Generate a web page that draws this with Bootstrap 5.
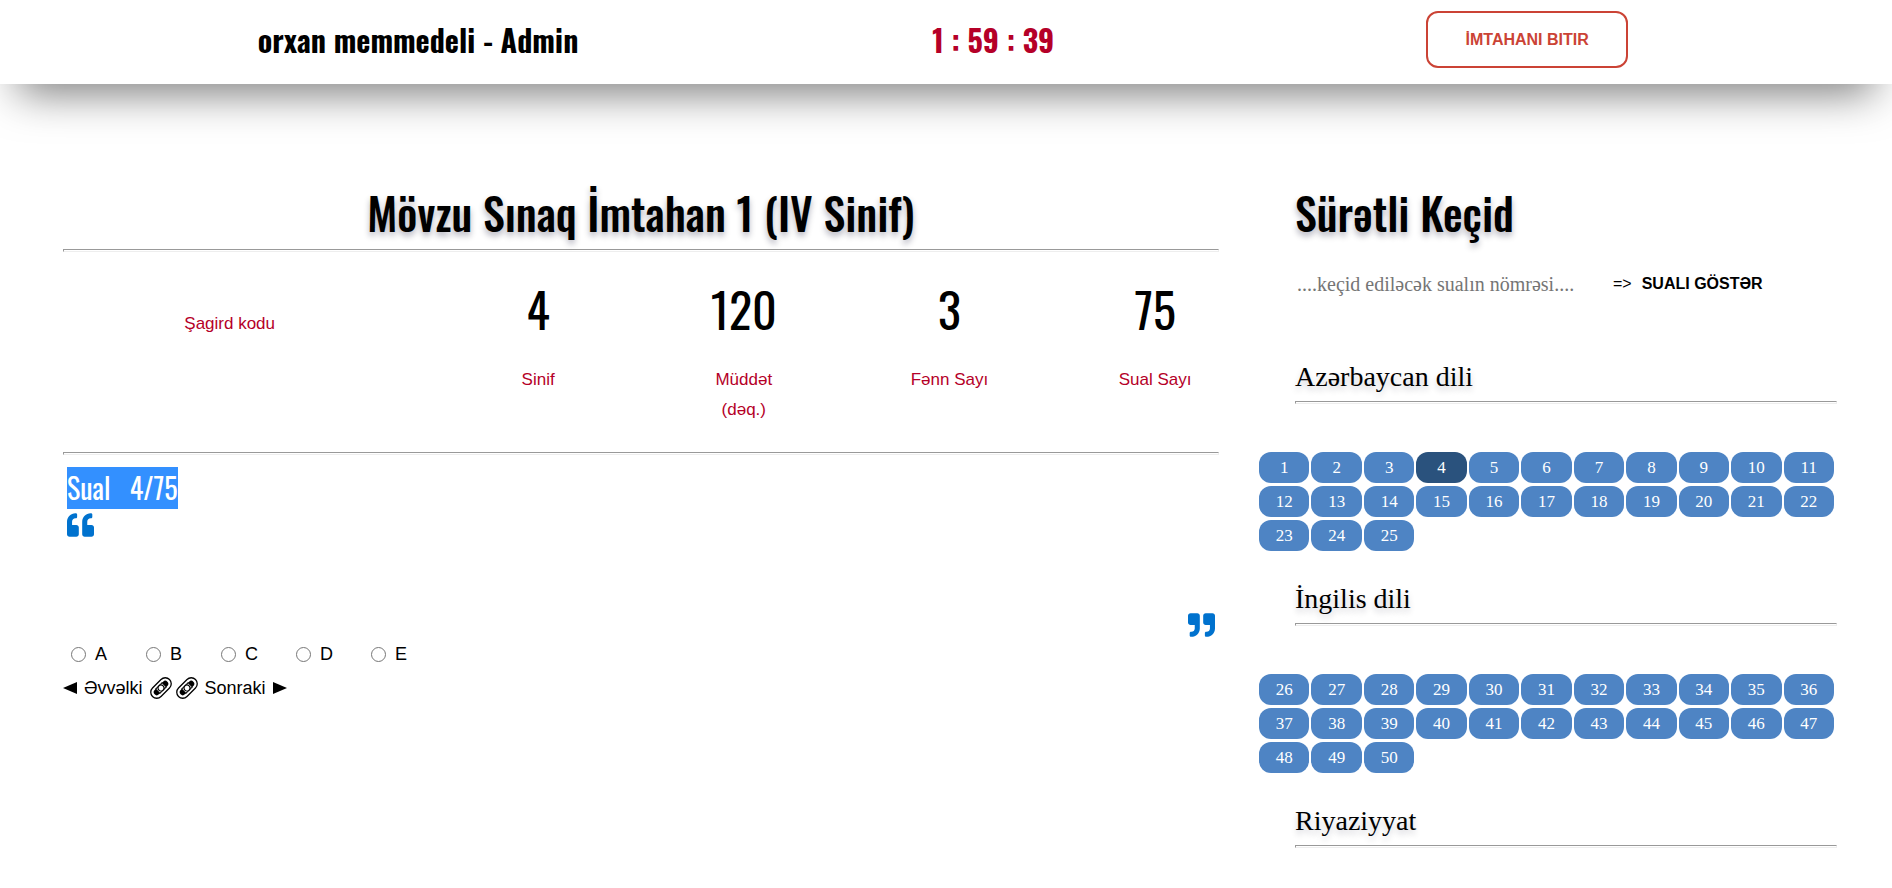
<!DOCTYPE html>
<html lang="az">
<head>
<meta charset="utf-8">
<meta name="viewport" content="width=device-width, initial-scale=1">
<title>Mövzu Sınaq İmtahan 1 (IV Sinif)</title>
<link href="https://cdn.jsdelivr.net/npm/bootstrap@5.3.0/dist/css/bootstrap.min.css" rel="stylesheet">
<style>
:root { --display: Oswald, "Liberation Sans Narrow", "Liberation Sans", sans-serif; --serif: "Palatino Linotype", Palatino, "Liberation Serif", serif; }
body { font-family: "Liberation Sans", sans-serif; color: #000; background: #fff; font-size: 18px; }
.topbar { display: grid; grid-template-columns: 44.2% 16.6% minmax(0, 1fr); height: 84px; box-shadow: 0 26px 44px -18px rgba(0, 0, 0, .55); }
.topbar > * { justify-self: center; }
.who, .clock { font-family: var(--display); font-weight: 700; font-size: 30px; line-height: 48px; white-space: nowrap; }
.clock, .stat-label { color: #b50028; }
.btn-finish { --bs-btn-color: #cb4335; --bs-btn-border-color: #cb4335; --bs-btn-hover-bg: #cb4335; --bs-btn-hover-color: #fff; border-width: 2px; border-radius: 12px; width: 202px; height: 57px; font-weight: 700; font-size: 16px; margin: 11px 0 0 12px; }
.exam-grid { display: grid; grid-template-columns: minmax(0, 2fr) minmax(0, 1fr); gap: 40px; padding: 92px 55px 0 63px; }
.exam-title { font-family: var(--display); font-weight: 500; font-size: 44px; line-height: 73px; margin: 0; white-space: nowrap; text-shadow: 0 4px 6px rgba(0, 0, 40, .3); }
.rule { border: 1px solid #eee; border-color: #999 #eee #eee #999; opacity: 1; height: 3px; margin: 0; }
.stats { margin: 0 -39px; height: 200px; }
.stat-num { font-family: var(--display); font-size: 48px; line-height: 60px; padding-top: 27px; }
.stat-label { font-size: 17px; line-height: 30px; }
.stat-num + .stat-label { padding-top: 26px; }
.code-label { padding-top: 57px; }
.q-mark { font-family: var(--display); background: #3390ff; color: #fff; font-size: 28px; line-height: 42px; white-space: pre; }
.quote-end { padding-top: 76px; }
.opt { width: 75px; gap: 9px; }
.opt input { width: 15px; height: 15px; margin: 0; }
.nav-btn { border: 0; background: none; padding: 0; color: #000; display: flex; align-items: center; gap: 7px; line-height: 24px; }
.indent { padding-left: 36px; }
.jump { padding-top: 20px; margin-bottom: 59px; }
.jump input { border: 0; outline: 0; padding: 0 2px; width: 284px; font-family: var(--serif); font-size: 20px; color: #000; line-height: 30px; }
.jump input::placeholder { color: #757575; opacity: 1; }
.jump button { border: 0; background: none; padding: 0; font-weight: 700; font-size: 16px; color: #000; }
.equals { margin: 0 10px 0 34px; font-size: 16px; }
.subject { font-family: var(--serif); font-size: 28px; line-height: 38px; margin: 0; padding-bottom: 5px; text-shadow: 0 4px 6px rgba(0, 0, 40, .2); }
.pills { display: grid; grid-template-columns: repeat(11, minmax(0, 1fr)); gap: 3px 2px; padding: 48px 3px 0 0; margin-bottom: 29px; }
.pills button { border: 0; border-radius: 12px; background: #4e84c4; color: #fff; height: 31px; padding: 0; font: 17px/31px var(--serif); }
.pills button.now { background: #2a527d; }
</style>
</head>
<body>
<header class="topbar">
  <div class="who pt-3">orxan memmedeli - Admin</div>
  <div class="clock pt-3">1 : 59 : 39</div>
  <button type="button" class="btn btn-finish align-self-start">İMTAHANI BITIR</button>
</header>
<main class="exam-grid">
  <section>
    <h1 class="exam-title text-center">Mövzu Sınaq İmtahan 1 (IV Sinif)</h1>
    <hr class="rule">
    <div class="row g-0 stats text-center">
      <div class="col-4"><div class="stat-label code-label">Şagird kodu</div></div>
      <div class="col-2"><div class="stat-num">4</div><div class="stat-label">Sinif</div></div>
      <div class="col-2"><div class="stat-num">120</div><div class="stat-label">Müddət<br>(dəq.)</div></div>
      <div class="col-2"><div class="stat-num">3</div><div class="stat-label">Fənn Sayı</div></div>
      <div class="col-2"><div class="stat-num">75</div><div class="stat-label">Sual Sayı</div></div>
    </div>
    <hr class="rule">
    <div class="px-1 pt-2 mt-1 d-flex"><span class="q-mark">Sual   4/75</span></div>
    <div class="px-1 pt-1 d-flex flex-column">
      <svg width="27" height="24" viewBox="0 0 512 448" fill="#0072ce" aria-hidden="true"><path d="M464 224h-80v-64c0-35 29-64 64-64h8c13 0 24-11 24-24V24c0-13-11-24-24-24h-8C360 0 288 72 288 160v240c0 27 21 48 48 48h128c27 0 48-21 48-48V272c0-27-21-48-48-48zm-288 0H96v-64c0-35 29-64 64-64h8c13 0 24-11 24-24V24c0-13-11-24-24-24h-8C72 0 0 72 0 160v240c0 27 21 48 48 48h128c27 0 48-21 48-48V272c0-27-21-48-48-48z"/></svg>
      <div class="quote-end text-end lh-1"><svg class="d-inline-block mb-1" width="27" height="24" viewBox="0 0 512 448" fill="#0072ce" aria-hidden="true"><path d="M464 0H336c-27 0-48 21-48 48v128c0 27 21 48 48 48h80v64c0 35-29 64-64 64h-8c-13 0-24 11-24 24v48c0 13 11 24 24 24h8c88 0 160-72 160-160V48c0-27-21-48-48-48zM176 0H48C21 0 0 21 0 48v128c0 27 21 48 48 48h80v64c0 35-29 64-64 64h-8c-13 0-24 11-24 24v48c0 13 11 24 24 24h8c88 0 160-72 160-160V48c0-27-21-48-48-48z"/></svg></div>
    </div>
    <div class="d-flex ps-2" id="options"></div>
    <div class="d-flex gap-1 pt-2">
      <button type="button" class="nav-btn"><svg width="14" height="14" viewBox="0 0 14 14" aria-hidden="true"><path d="M0 7 14 1v12z"/></svg>Əvvəlki <svg width="22" height="22" viewBox="0 0 22 22" aria-hidden="true"><use href="#chain"/></svg></button>
      <button type="button" class="nav-btn"><svg width="22" height="22" viewBox="0 0 22 22" aria-hidden="true"><g id="chain" transform="rotate(-45 11 11)" fill="none" stroke="#000"><rect x="-1" y="5" width="24" height="12" rx="6" stroke-width="1.300"/><path d="M7 8H5a3 3 0 0 0 0 6h2zM15 8h2a3 3 0 0 1 0 6h-2z" fill="#000" stroke="none"/><path d="M6 8h10M6 14h10" stroke-width="1"/><circle cx="11" cy="11" r="3" fill="#fff" stroke-width="1.200"/></g></svg>Sonraki <svg width="14" height="14" viewBox="0 0 14 14" aria-hidden="true"><path d="M14 7 0 1v12z"/></svg></button>
    </div>
  </section>
  <aside>
    <h2 class="exam-title indent">Sürətli Keçid</h2>
    <form class="jump indent d-flex align-items-center" onsubmit="return false">
      <input type="text" aria-label="Sualın nömrəsi" placeholder="....keçid ediləcək sualın nömrəsi....">
      <span class="equals">=&gt;</span>
      <button type="submit">SUALI GÖSTƏR</button>
    </form>
    <div id="subjects"></div>
  </aside>
</main>
<script src="https://cdn.jsdelivr.net/npm/bootstrap@5.3.0/dist/js/bootstrap.bundle.min.js"></script>
<script>
document.getElementById('options').innerHTML = ['A', 'B', 'C', 'D', 'E'].map(l =>
  `<label class="opt d-flex align-items-center"><input type="radio" name="answer" value="${l}">${l}</label>`).join('');
const current = 4;
const subjects = [['Azərbaycan dili', 1, 25], ['İngilis dili', 26, 50], ['Riyaziyyat', 0, -1]];
document.getElementById('subjects').innerHTML = subjects.map(([name, from, to]) => {
  let pills = '';
  for (let n = from; n <= to; n++) pills += `<button type="button"${n === current ? ' class="now"' : ''}>${n}</button>`;
  return `<div class="indent"><h3 class="subject">${name}</h3><hr class="rule"></div>` + (pills && `<div class="pills">${pills}</div>`);
}).join('');
</script>
</body>
</html>
